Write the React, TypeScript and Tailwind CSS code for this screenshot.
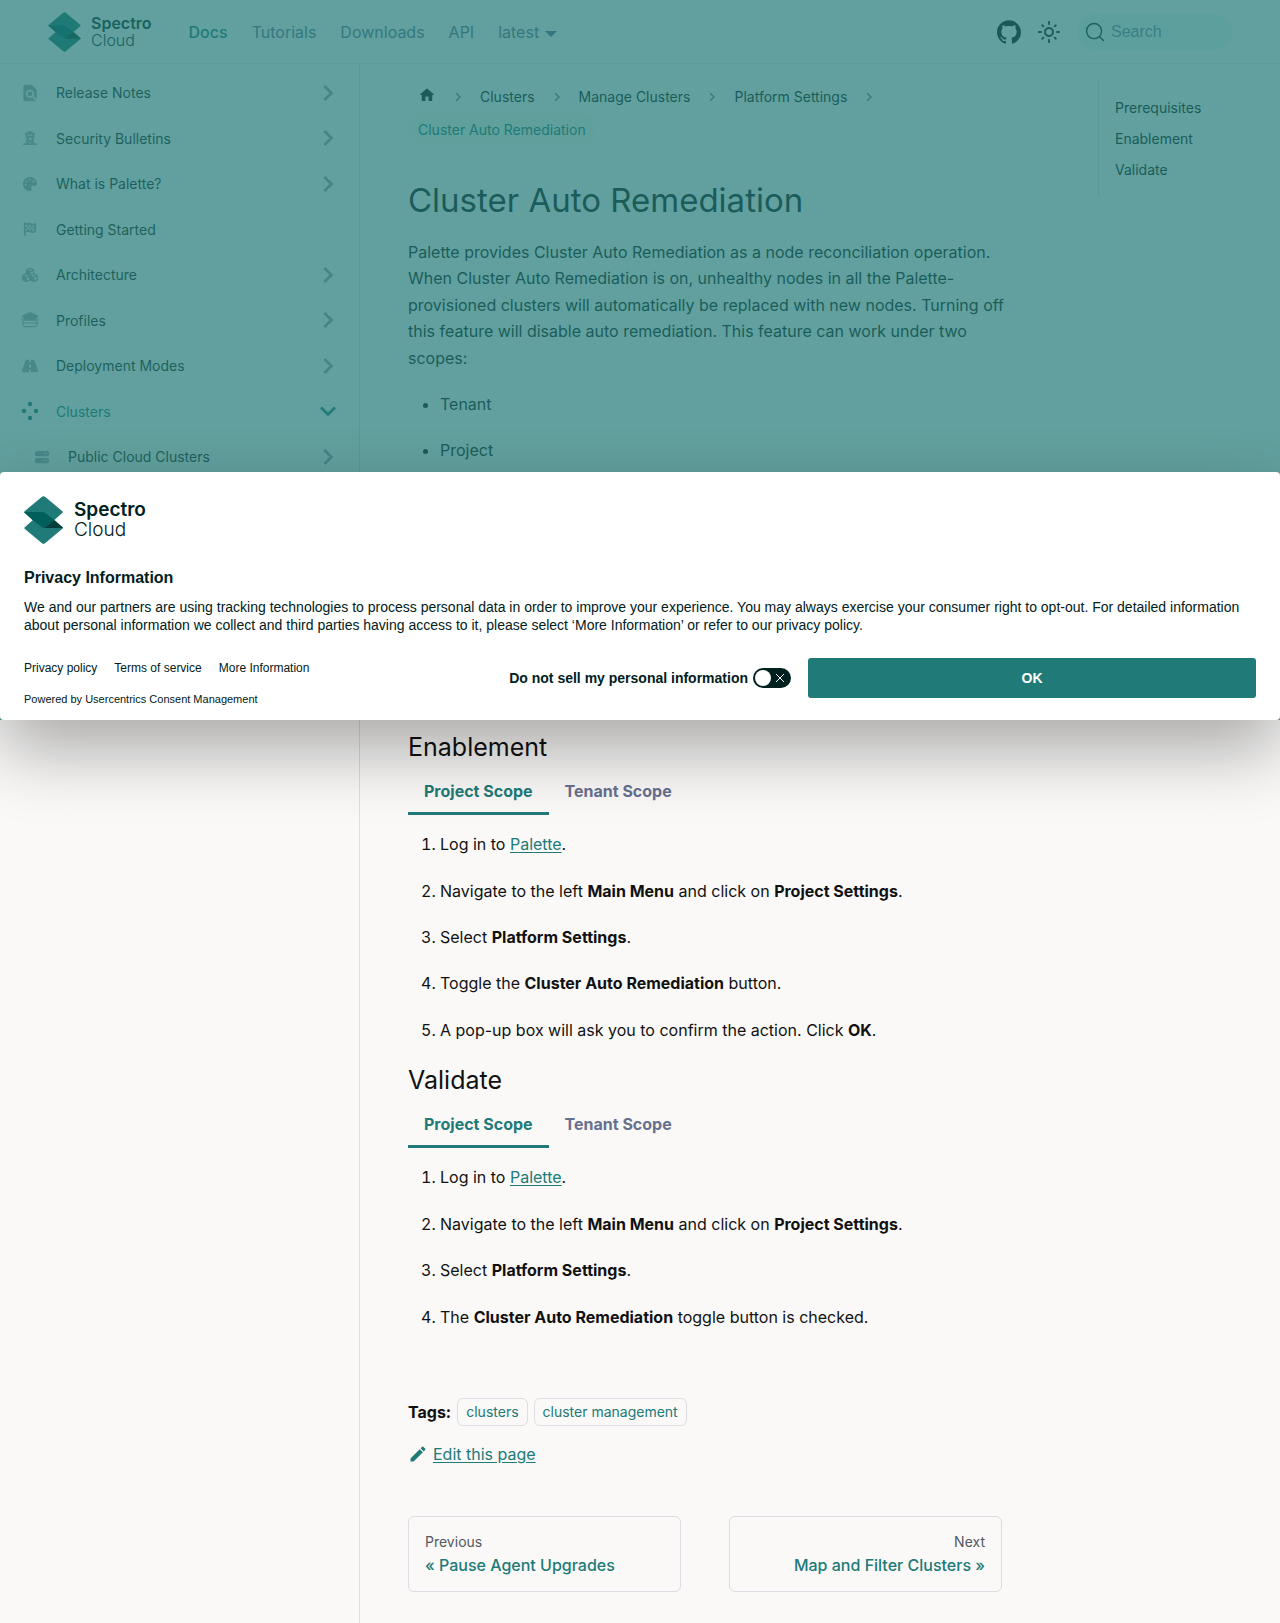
import React from 'react';
import {
  FaTowerObservation,
  FaPalette,
  FaFlagCheckered,
  FaCubes,
  FaRoad,
  FaServer,
} from 'react-icons/fa6';
import { MdFindInPage, MdOutlineLightMode, MdEdit } from 'react-icons/md';

function LogoMark({ className }: { className: string }) {
  return (
    <svg viewBox="0 0 39 48" className={className} aria-hidden="true">
      <path
        d="M0.8 31.2 8.6 24.2 19.5 16 38.4 31.2Q39.4 32 38.4 32.8L21 47.2Q19.5 48.4 18 47.2L0.6 32.8Q-0.3 32 .8 31.2Z"
        fill="#207a77"
      />
      <path
        d="M0.6 15.2 18 .8Q19.5 -.4 21 .8L38.4 15.2Q39.4 16 38.4 16.8L30.4 24 19.5 32 8.6 24 .6 16.8Q-.4 16 .6 15.2Z"
        fill="#207a77"
      />
      <path d="M.2 16H17.5Q20 16 21.6 17.3L30.4 24 20.8 32.1 19.3 31.9 8.6 24 .6 16.8Z" fill="#005e5b" />
      <path d="M30.4 24 38.6 31.3Q39 31.8 38.6 32H20.8Z" fill="#033d3b" />
    </svg>
  );
}

function StackIcon({ className }: { className?: string }) {
  return (
    <svg viewBox="0 0 20 18" className={className} aria-hidden="true">
      <path d="M10 .5 18.6 4.4 16 9.4H4L1.4 4.4Z" fill="currentColor" stroke="currentColor" strokeLinejoin="round" />
      <path
        d="M1.2 8.2 3.4 12.4H16.6L18.8 8.2M1.2 12 3.4 16.4H16.6L18.8 12"
        fill="none"
        stroke="currentColor"
        strokeWidth="1.3"
        strokeLinejoin="round"
        strokeLinecap="round"
      />
    </svg>
  );
}

function DotsIcon({ className }: { className?: string }) {
  return (
    <svg viewBox="0 0 18 20" className={className} fill="currentColor" aria-hidden="true">
      <circle cx="9" cy="3" r="2.2" />
      <circle cx="3" cy="10" r="2.2" />
      <circle cx="15" cy="10" r="2.2" />
      <circle cx="9" cy="17" r="2.2" />
    </svg>
  );
}

function GithubIcon() {
  return (
    <svg viewBox="0 0 24 24" className="size-6" fill="currentColor" aria-hidden="true">
      <path d="M12 .297c-6.63 0-12 5.373-12 12 0 5.303 3.438 9.8 8.205 11.385.6.113.82-.258.82-.577 0-.285-.01-1.04-.015-2.04-3.338.724-4.042-1.61-4.042-1.61C4.422 18.07 3.633 17.7 3.633 17.7c-1.087-.744.084-.729.084-.729 1.205.084 1.838 1.236 1.838 1.236 1.07 1.835 2.809 1.305 3.495.998.108-.776.417-1.305.76-1.605-2.665-.3-5.466-1.332-5.466-5.93 0-1.31.465-2.38 1.235-3.22-.135-.303-.54-1.523.105-3.176 0 0 1.005-.322 3.3 1.23.96-.267 1.98-.399 3-.405 1.02.006 2.04.138 3 .405 2.28-1.552 3.285-1.23 3.285-1.23.645 1.653.24 2.873.12 3.176.765.84 1.23 1.91 1.23 3.22 0 4.61-2.805 5.625-5.475 5.92.42.36.81 1.096.81 2.22 0 1.606-.015 2.896-.015 3.286 0 .315.21.69.825.57C20.565 22.092 24 17.592 24 12.297c0-6.627-5.373-12-12-12" />
    </svg>
  );
}

function Chevron({ open }: { open?: boolean }) {
  return (
    <svg
      viewBox="0 0 24 24"
      className={open ? 'size-8 rotate-180 text-[#207a77]' : 'size-8 rotate-90 text-[#9699ab]'}
      fill="currentColor"
      aria-hidden="true"
    >
      <path d="M7.41 15.41L12 10.83l4.59 4.58L18 14l-6-6-6 6z" />
    </svg>
  );
}

type Item = { label: string; icon: React.ReactNode; expandable?: boolean; active?: boolean; nested?: boolean };

const sidebar: Item[] = [
  { label: 'Release Notes', icon: <MdFindInPage className="size-5" />, expandable: true },
  { label: 'Security Bulletins', icon: <FaTowerObservation className="size-3.5" />, expandable: true },
  { label: 'What is Palette?', icon: <FaPalette className="size-3.5" />, expandable: true },
  { label: 'Getting Started', icon: <FaFlagCheckered className="size-3.5" /> },
  { label: 'Architecture', icon: <FaCubes className="size-4" />, expandable: true },
  { label: 'Profiles', icon: <StackIcon className="h-4 w-[18px]" />, expandable: true },
  { label: 'Deployment Modes', icon: <FaRoad className="size-4" />, expandable: true },
  { label: 'Clusters', icon: <DotsIcon className="h-5 w-[18px]" />, expandable: true, active: true },
  { label: 'Public Cloud Clusters', icon: <FaServer className="size-3.5" />, expandable: true, nested: true },
];

function Sidebar() {
  return (
    <nav aria-label="Docs sidebar" className="w-[360px] shrink-0 border-r border-[#dadde1] px-2 pt-2">
      <ul className="flex flex-col gap-1 text-sm leading-tight text-[#1c1e21]">
        {sidebar.map((item) => (
          <li key={item.label} className={item.nested ? 'flex items-center pl-3' : 'flex items-center'}>
            <a
              href="#"
              className={
                item.active
                  ? 'flex flex-1 items-center gap-4 py-3 pl-3 text-[#207a77]'
                  : 'flex flex-1 items-center gap-4 py-3 pl-3'
              }
            >
              <span
                className={
                  item.active
                    ? 'flex h-4 w-5 items-center justify-center text-[#207a77]'
                    : 'flex h-4 w-5 items-center justify-center text-[#a4a8b0]'
                }
              >
                {item.icon}
              </span>
              {item.label}
            </a>
            {item.expandable && (
              <button type="button" aria-label={`Toggle ${item.label}`} className="-my-2 mr-[7px]">
                <Chevron open={item.active} />
              </button>
            )}
          </li>
        ))}
      </ul>
    </nav>
  );
}

function Header() {
  return (
    <header className="mb-px flex h-[63px] items-center px-12 shadow-[0_1px_2px_0_rgba(0,0,0,0.1)]">
      <a href="#" aria-label="Spectro Cloud" className="mr-9 flex items-center gap-2.5 text-[#0a2826]">
        <LogoMark className="h-10 w-[33px]" />
        <span className="flex flex-col text-base leading-[17px]">
          <span className="font-semibold">Spectro</span>
          <span className="font-light">Cloud</span>
        </span>
      </a>
      <nav aria-label="Main" className="ml-px flex items-center gap-6 text-[#68708f]">
        <a href="#" className="font-medium text-[#207a77]">Docs</a>
        <a href="#">Tutorials</a>
        <a href="#">Downloads</a>
        <a href="#">API</a>
        <button type="button" className="flex items-center gap-1.5">
          latest
          <span className="mt-1 border-x-6 border-t-6 border-x-transparent border-t-current" />
        </button>
      </nav>
      <div className="ml-auto flex items-center gap-4 text-[#1c1e21]">
        <a href="#" aria-label="GitHub repository" className="text-[#0a0a0a]">
          <GithubIcon />
        </a>
        <button type="button" aria-label="Switch to dark mode">
          <MdOutlineLightMode className="size-6" />
        </button>
        <label className="flex h-9 w-[155px] items-center gap-1.5 rounded-full bg-[#ebf4f4] px-2">
          <svg viewBox="0 0 20 20" className="size-5 shrink-0" aria-hidden="true">
            <path
              d="M14.386 14.386l4.0877 4.0877-4.0877-4.0877c-2.9418 2.9419-7.7115 2.9419-10.6533 0-2.9419-2.9418-2.9419-7.7115 0-10.6533 2.9418-2.9419 7.7115-2.9419 10.6533 0 2.9419 2.9418 2.9419 7.7115 0 10.6533z"
              stroke="currentColor"
              strokeWidth="1.4"
              fill="none"
              strokeLinecap="round"
              strokeLinejoin="round"
            />
          </svg>
          <input
            type="search"
            aria-label="Search"
            placeholder="Search"
            className="w-full min-w-0 bg-transparent font-['Liberation_Sans',Arial,sans-serif] text-base outline-none placeholder:text-[#7f87a6]"
          />
        </label>
      </div>
    </header>
  );
}

function Separator() {
  return (
    <svg viewBox="0 0 24 24" className="size-6" aria-hidden="true">
      <path d="M10.2 8.2 14 12l-3.8 3.8" fill="none" stroke="#6f7478" strokeWidth="1.3" />
    </svg>
  );
}

function Breadcrumbs() {
  const crumb = 'inline-flex h-[33px] items-center px-2.5';
  return (
    <nav aria-label="Breadcrumbs">
      <ol className="flex flex-wrap text-sm">
        <li className="flex items-center">
          <a href="#" aria-label="Home page" className={crumb}>
            <svg viewBox="0 0 24 24" className="mb-1 size-[18px]" aria-hidden="true">
              <path d="M10 19v-5h4v5c0 .55.45 1 1 1h3c.55 0 1-.45 1-1v-7h1.7c.46 0 .68-.57.33-.87L12.67 3.6c-.38-.34-.96-.34-1.34 0l-8.36 7.53c-.34.3-.13.87.33.87H5v7c0 .55.45 1 1 1h3c.55 0 1-.45 1-1z" fill="currentColor" />
            </svg>
          </a>
          <Separator />
        </li>
        {['Clusters', 'Manage Clusters', 'Platform Settings'].map((c) => (
          <li key={c} className="flex items-center">
            <a href="#" className={crumb}>{c}</a>
            <Separator />
          </li>
        ))}
        <li>
          <span aria-current="page" className="inline-flex h-[33px] items-center rounded-full bg-[#f4f3f2] px-2.5 text-[#207a77]">
            Cluster Auto Remediation
          </span>
        </li>
      </ol>
    </nav>
  );
}

function ScopeTabs({ label }: { label: string }) {
  return (
    <div role="tablist" aria-label={label} className="mt-2 mb-4 flex leading-[1.65] font-bold">
      <button type="button" role="tab" aria-selected="true" className="border-b-3 border-[#207a77] px-4 py-2 text-[#207a77]">
        Project Scope
      </button>
      <button type="button" role="tab" aria-selected="false" className="border-b-3 border-transparent px-4 py-2 text-[#68708f]">
        Tenant Scope
      </button>
    </div>
  );
}

const link = 'text-[#207a77] underline underline-offset-2';

function CommonSteps() {
  return (
    <>
      <li>Log in to <a href="#" className={link}>Palette</a>.</li>
      <li>Navigate to the left <b>Main Menu</b> and click on <b>Project Settings</b>.</li>
      <li>Select <b>Platform Settings</b>.</li>
    </>
  );
}

function Article() {
  return (
    <main className="min-w-0 flex-1 pt-4">
      <Breadcrumbs />
      <h1 className="mt-[34px] text-[33px] leading-10">Cluster Auto Remediation</h1>
      <p className="mt-[19px] leading-[1.65]">
        Palette provides Cluster Auto Remediation as a node reconciliation operation. When Cluster Auto Remediation is
        on, unhealthy nodes in all the Palette-
        <span className="whitespace-nowrap">
          provisioned clusters will automatically be replaced with new nodes. Turning off
        </span>{' '}
        this feature will disable auto remediation. This feature can work under two scopes:
      </p>
      <ul className="mt-5 flex list-disc flex-col gap-5 pl-8 leading-[1.65]">
        <li>Tenant</li>
        <li>Project</li>
      </ul>
      <section id="prerequisites" aria-label="Prerequisites" className="h-[268px]" />

      <h2 id="enablement" className="text-[25px] leading-[30px]">Enablement</h2>
      <ScopeTabs label="Enablement scope" />
      <ol className="flex list-decimal flex-col gap-5 pl-8 leading-[1.65]">
        <CommonSteps />
        <li>Toggle the <b>Cluster Auto Remediation</b> button.</li>
        <li>A pop-up box will ask you to confirm the action. Click <b>OK</b>.</li>
      </ol>

      <h2 id="validate" className="mt-[22px] text-[25px] leading-[30px]">Validate</h2>
      <ScopeTabs label="Validate scope" />
      <ol className="flex list-decimal flex-col gap-5 pl-8 leading-[1.65]">
        <CommonSteps />
        <li>The <b>Cluster Auto Remediation</b> toggle button is checked.</li>
      </ol>

      <footer className="mt-[68px]">
        <div className="flex items-center">
          <b className="mr-1.5">Tags:</b>
          <ul className="flex gap-1.5 text-sm text-[#207a77]">
            <li><a href="#" className="flex h-7 items-center rounded-md border border-[#dadde1] px-2">clusters</a></li>
            <li><a href="#" className="flex h-7 items-center rounded-md border border-[#dadde1] px-2">cluster management</a></li>
          </ul>
        </div>
        <a href="#" className="mt-4 inline-flex items-center gap-[5px] text-[#207a77]">
          <MdEdit className="size-5" />
          <span className="underline underline-offset-2">Edit this page</span>
        </a>
      </footer>

      <nav aria-label="Docs pages" className="mt-[46px] mb-8 grid grid-cols-2 gap-12">
        <a href="#" className="rounded-md border border-[#dadde1] px-4 pt-[15px] pb-[13px]">
          <div className="text-sm leading-5 text-[#525860]">Previous</div>
          <div className="leading-[26px] font-medium text-[#207a77]">« Pause Agent Upgrades</div>
        </a>
        <a href="#" className="rounded-md border border-[#dadde1] px-4 pt-[15px] pb-[13px] text-right">
          <div className="text-sm leading-5 text-[#525860]">Next</div>
          <div className="leading-[26px] font-medium text-[#207a77]">Map and Filter Clusters »</div>
        </a>
      </nav>
    </main>
  );
}

function PrivacyBanner() {
  return (
    <section
      aria-label="Privacy Information"
      className="rounded bg-white px-6 pt-6 font-['Liberation_Sans',Arial,sans-serif] text-[#012020] shadow-[0_30px_70px_rgba(0,0,0,0.32)]"
    >
      <div className="flex h-12 items-center gap-[11px] font-['Inter',sans-serif]">
        <LogoMark className="h-12 w-[39px]" />
        <span className="flex flex-col text-[19px] leading-5">
          <span className="font-semibold">Spectro</span>
          <span className="font-light">Cloud</span>
        </span>
      </div>
      <h2 className="mt-6 text-base leading-5 font-bold">Privacy Information</h2>
      <p className="mt-2.5 text-sm leading-[18px]">
        We and our partners are using tracking technologies to process personal data in order to improve your
        experience. You may always exercise your consumer right to opt-out. For detailed information about personal
        information we collect and third parties having access to it, please select ‘More Information’ or refer to our
        privacy policy.
      </p>
      <div className="mt-6 flex h-[62px] items-start">
        <div>
          <div className="flex gap-[17px] text-xs leading-5">
            <a href="#">Privacy policy</a>
            <a href="#">Terms of service</a>
            <a href="#">More Information</a>
          </div>
          <p className="mt-3 text-[11px] leading-[18px]">
            Powered by <a href="#">Usercentrics Consent Management</a>
          </p>
        </div>
        <label className="mr-[17px] ml-auto flex h-10 items-center gap-[5px] text-sm font-bold">
          Do not sell my personal information
          <input type="checkbox" role="switch" className="sr-only" />
          <span className="flex h-5 w-[38px] items-center justify-between rounded-full bg-[#012020] pr-1.5 pl-0.5">
            <span className="size-4 rounded-full bg-white" />
            <svg viewBox="0 0 10 10" className="size-2.5" aria-hidden="true">
              <path d="M1 1l8 8M9 1L1 9" stroke="#fff" strokeWidth="1" />
            </svg>
          </span>
        </label>
        <button type="button" className="h-10 w-[448px] rounded-[3px] bg-[#207a77] text-sm font-bold text-white">
          OK
        </button>
      </div>
    </section>
  );
}

export default function App() {
  return (
    <div className="relative flex min-h-screen flex-col bg-[#faf9f8] font-['Inter',sans-serif] text-base text-[#111]">
      <Header />
      <div className="flex flex-1">
        <Sidebar />
        <div className="flex min-w-0 flex-1 gap-24 px-12">
          <Article />
          <aside className="w-[134px] shrink-0 pt-4">
            <ul className="flex flex-col gap-2 border-l border-[#dadde1] px-4 py-4 text-sm leading-[23px]">
              <li><a href="#prerequisites">Prerequisites</a></li>
              <li><a href="#enablement">Enablement</a></li>
              <li><a href="#validate">Validate</a></li>
            </ul>
          </aside>
        </div>
      </div>
      <div className="absolute inset-x-0 top-0 flex h-[720px] flex-col justify-end bg-[#207a77]/70">
        <PrivacyBanner />
      </div>
    </div>
  );
}
